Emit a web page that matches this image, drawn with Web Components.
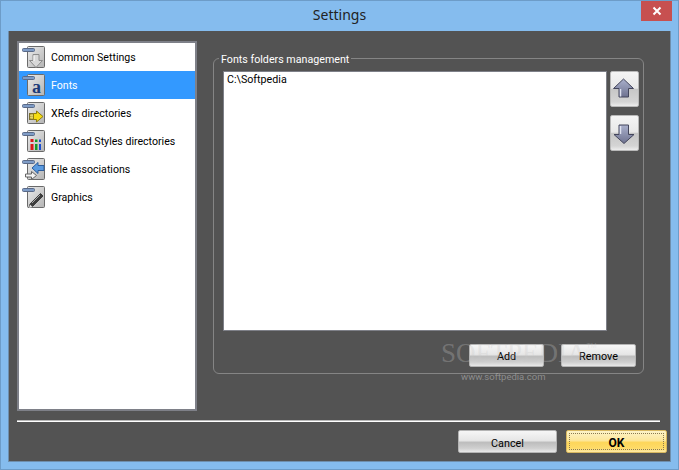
<!DOCTYPE html>
<html><head><meta charset="utf-8"><style>
html,body{margin:0;padding:0;background:#85bcee}
body{font:10.6px Roboto,"Liberation Sans",sans-serif;color:#000}
</style></head><body>
<settings-window>
  <side-item kind="down">Common Settings</side-item>
  <side-item kind="a" selected>Fonts</side-item>
  <side-item kind="xref">XRefs directories</side-item>
  <side-item kind="bars">AutoCad Styles directories</side-item>
  <side-item kind="assoc">File associations</side-item>
  <side-item kind="pen">Graphics</side-item>
</settings-window>
<script>
const FONT='Roboto,"Liberation Sans",Arial,sans-serif';
const glyphs={
down:'<path d="M12 9.500h6v6h3.500L15 22.500l-6.500-7H12z" fill="#d8d8d8" stroke="#8c8c8c"/><path d="M13 10.500v5.500" stroke="#fff"/>',
a:'<text x="15.500" y="20" font-family="Liberation Serif,serif" font-weight="700" font-size="18" text-anchor="middle" fill="#1c3a78">a</text>',
xref:'<rect x="8.500" y="12.500" width="7" height="6" fill="#b9a63a" stroke="#7c7030"/><path d="M9 14.500h6M9 16.500h6M11 13v5M13 13v5" stroke="#e8dc70" stroke-width=".8"/><path d="M15.500 10l6.500 5.500-6.500 5.500v-2.500h-3v-6h3z" fill="#f5dc10" stroke="#8f7d10"/>',
bars:'<path d="M9.500 10h3v3h-3zM9.500 15h3v6h-3z" fill="#d81818"/><path d="M14 10.500h2.500v2.500H14zM14 15h2.500v6H14z" fill="#149a24"/><path d="M18 10.500h2v2.500h-2zM18 15h2v6h-2z" fill="#1d4fd0"/>',
assoc:'<path d="M4.500 20v-3h6v-2.500l5 4-5 4V20z" fill="#f4f4f4" stroke="#666"/><path d="M23 8.500v5h-6v3l-6-5.500 6-5.500v3z" fill="#5b9be0" stroke="#2d5d9c"/>',
pen:'<path d="M19.500 8.500l2.500 2.500-10.500 10.500-3.500 1 1-3.500z" fill="#3c3c3c" stroke="#222" stroke-width=".7"/><path d="M9 19.500l2.500 2.500-3.500 1z" fill="#e8e8e8"/><path d="M11 18l8-8" stroke="#aaa"/>'};
let uid=0;
function iconSvg(kind,id){return `<svg width="24" height="24" viewBox="0 0 24 24" aria-hidden="true">
<defs><linearGradient id="g${id}" x2="1" y2="1"><stop offset="0" stop-color="#ececec"/><stop offset="1" stop-color="#b4b4b4"/></linearGradient></defs>
<rect x="6.500" y="1.500" width="17" height="21" rx="1" fill="url(#g${id})" stroke="#6a6a6a"/>
${glyphs[kind]}
<rect x="1.500" y="3.500" width="12" height="3" rx="1" fill="#7f9cc6" stroke="#5a6a88"/></svg>`}
class SideItem extends HTMLElement{constructor(){super();const s=this.attachShadow({mode:'open'});
s.innerHTML=`<style>:host{display:flex;align-items:center;height:28px;box-sizing:border-box;padding-left:2px;gap:6px;font:10.6px ${FONT};color:#000;white-space:nowrap}
:host([selected]){background:#3399ff;color:#fff}svg{display:block;flex:none}</style>${iconSvg(this.getAttribute('kind'),++uid)}<slot></slot>`}}
customElements.define('side-item',SideItem);
class PushButton extends HTMLElement{constructor(){super();this.attachShadow({mode:'open'}).innerHTML=`<style>
:host{display:flex;align-items:center;justify-content:center;box-sizing:border-box;border:1px solid #b4b4b4;border-radius:2px;font:10.8px ${FONT};color:#000;
background:linear-gradient(#f6f6f6,#e6e6e6 45%,#bdbdbd 55%,#cfcfcf 82%,#e8e8e8);width:var(--w,75px);height:var(--h,23px)}
:host([primary]){font-weight:700;font-size:12px;border-color:#d8b860;background:linear-gradient(#fdf3c8,#fde79a 45%,#fdd65a 55%,#fedb68 82%,#feeaa8)}
:host([primary]) span{outline:1px dotted #8a7a50;outline-offset:-1px;width:calc(100% - 4px);height:calc(100% - 4px);display:flex;align-items:center;justify-content:center}
span{display:flex;padding-top:var(--pt,1px);box-sizing:border-box}</style><span><slot></slot></span>`}}
customElements.define('push-button',PushButton);
class ArrowButton extends HTMLElement{constructor(){super();const up=this.hasAttribute('up');const id=++uid;
const p=up?'M12.500 7l10 9.500H17.500v8.500h-9.500v-8.500H2.500z':'M8 9h9.500v9.500h5.500l-10 9-10-9H8z';
this.attachShadow({mode:'open'}).innerHTML=`<style>:host{display:block;box-sizing:border-box;width:29px;height:36px;border:1px solid #b8b8b8;border-radius:2px;background:linear-gradient(#f4f4f4,#e8e8e8 48%,#c6c6c6 50%,#d4d4d4 88%,#ececec)}svg{display:block}</style>
<svg width="27" height="34" viewBox="0 0 27 34" aria-hidden="true"><defs><linearGradient id="ar${id}" x2="0" y2="1"><stop offset="0" stop-color="#aab0cc"/><stop offset="1" stop-color="#6e7290"/></linearGradient></defs><path d="${p}" fill="url(#ar${id})" stroke="#44465c"/><path d="${up?'M9.500 17v7.500':'M9.500 10v8'}" stroke="#dfe2f0" stroke-width="1.500"/></svg>`}}
customElements.define('arrow-button',ArrowButton);
class SettingsWindow extends HTMLElement{constructor(){super();this.attachShadow({mode:'open'}).innerHTML=`<style>
:host{display:flex;flex-direction:column;width:679px;height:470px;box-sizing:border-box;border:1px solid #6d9cc8;background:#85bcee;font:10.7px ${FONT};position:relative;overflow:hidden}
.title{height:29px;flex:none;display:flex;align-items:center;justify-content:center;font:14px "Noto Sans",sans-serif;color:#222;position:relative;padding-bottom:2px;box-sizing:border-box}
.close{position:absolute;right:6px;top:0;width:31px;height:20px;background:#c75050;display:flex;align-items:center;justify-content:center}
.client{flex:1;margin:1px 7px 7px;background:#535353;border:1px solid #6f8fad;border-width:0 1px 1px;padding:10px 9px 8px 8px;display:flex;flex-direction:column;min-height:0}
.top{flex:1;display:flex;min-height:0;gap:16px}
.side{width:180px;height:370px;box-sizing:border-box;border:2px solid #7e8088;background:#fff;flex:none}
.group{width:431px;height:316px;margin-top:17px;box-sizing:border-box;border:1px solid #858585;border-radius:6px;position:relative;padding:12px 4px 6px 9px;display:flex;flex-direction:column}
.legend{position:absolute;left:5px;top:-6px;background:#535353;padding:0 2px;color:#fff;line-height:13px}
.row{display:flex;gap:3px}
.list{width:384px;height:260px;box-sizing:border-box;background:#fff;border:1px solid #7e8088;padding:1px 3px;line-height:13px;color:#000}
.arrows{display:flex;flex-direction:column;gap:8px}
.btns{display:flex;justify-content:flex-end;gap:17px;margin-top:13px;padding-right:3px}
.sep{height:2px;background:linear-gradient(#b8b8b8 50%,#fff 50%);margin:10px 0 0;width:643px;flex:none}
.foot{display:flex;justify-content:flex-end;gap:9px;margin-top:8px;margin-right:-6px;--pt:3px}
.wm{position:absolute;left:440px;top:336px;pointer-events:none;color:rgba(200,200,200,.3);font-family:"Liberation Serif",serif;font-size:27px;line-height:32px;white-space:nowrap}
.wm sup{font:7px "Liberation Sans",sans-serif;vertical-align:14px}
.wm small{display:block;font:9.500px/12px Roboto,sans-serif;margin:2px 0 0 20px;color:rgba(200,200,200,.5)}
</style>
<div class="title">Settings<div class="close"><svg width="10" height="10" viewBox="0 0 10 10" aria-hidden="true"><path d="M1.500 1.500l7 7M8.500 1.500l-7 7" stroke="#fff" stroke-width="2"/></svg></div></div>
<div class="client">
 <div class="top">
  <div class="side"><slot></slot></div>
  <div class="group"><div class="legend">Fonts folders management</div>
   <div class="row"><div class="list">C:\\Softpedia</div><div class="arrows"><arrow-button up></arrow-button><arrow-button></arrow-button></div></div>
   <div class="btns"><push-button>Add</push-button><push-button>Remove</push-button></div>
  </div>
 </div>
 <div class="sep"></div>
 <div class="foot"><push-button style="--w:99px">Cancel</push-button><push-button primary style="--w:101px">OK</push-button></div>
</div>
<div class="wm">SOFTPEDIA<sup>TM</sup><small>www.softpedia.com</small></div>`}}
customElements.define('settings-window',SettingsWindow);
</script>
</body></html>
